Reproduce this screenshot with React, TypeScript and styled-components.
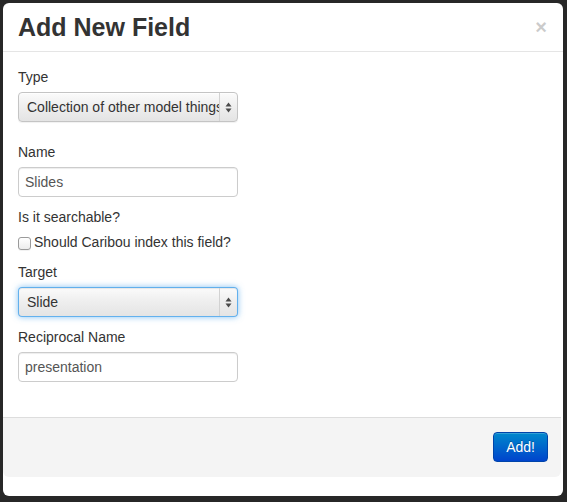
import React from 'react';
import styled, { createGlobalStyle } from 'styled-components';

const GlobalStyle = createGlobalStyle`
  html, body {
    margin: 0;
    padding: 0;
    background: #272727;
  }
  body {
    font-family: 'Liberation Sans', Arial, sans-serif;
    font-size: 14px;
    color: #333;
  }
`;

const Page = styled.div`
  width: 567px;
  height: 502px;
  padding: 3px;
  box-sizing: border-box;
`;

const Modal = styled.div`
  width: 560px;
  height: 493px;
  background: #fff;
  border-radius: 6px;
  display: flex;
  flex-direction: column;
  overflow: hidden;
`;

const Header = styled.div`
  display: flex;
  justify-content: space-between;
  align-items: center;
  padding: 9px 16px 9px 15px;
  border-bottom: 1px solid #e5e5e5;
`;

const Title = styled.h3`
  margin: 0;
  font-size: 25px;
  line-height: 30px;
  font-weight: bold;
  color: #333;
`;

const Close = styled.button`
  border: 0;
  background: none;
  padding: 0;
  font-family: 'Liberation Sans', Arial, sans-serif;
  font-size: 20px;
  font-weight: bold;
  line-height: 20px;
  color: #000;
  opacity: 0.2;
  margin-top: -1px;
`;

const Body = styled.div`
  flex: 1;
  padding: 15px;
`;

const Field = styled.div<{ gap?: number }>`
  display: flex;
  flex-direction: column;
  align-items: flex-start;
  margin-bottom: ${(p) => p.gap ?? 10}px;
`;

const Label = styled.label`
  display: block;
  line-height: 20px;
  margin-bottom: 5px;
`;

const TextInput = styled.input`
  box-sizing: border-box;
  width: 220px;
  height: 30px;
  padding: 4px 6px;
  font-family: 'Liberation Sans', Arial, sans-serif;
  font-size: 14px;
  color: #555;
  border: 1px solid #ccc;
  border-radius: 4px;
  box-shadow: inset 0 1px 1px rgba(0, 0, 0, 0.075);
  outline: none;
`;

const SelectBox = styled.div<{ focused?: boolean }>`
  box-sizing: border-box;
  width: 220px;
  height: 30px;
  display: flex;
  align-items: stretch;
  border: 1px solid ${(p) => (p.focused ? 'rgba(82, 168, 236, 0.9)' : '#c4c4c4')};
  border-radius: 4px;
  background: linear-gradient(#fbfbfb, #efefef 45%, #e4e4e4);
  box-shadow: ${(p) =>
    p.focused
      ? '0 0 6px rgba(82, 168, 236, 0.7), inset 0 1px 1px rgba(0,0,0,0.08)'
      : 'inset 0 1px 0 rgba(255,255,255,0.8), 0 1px 1px rgba(0,0,0,0.06)'};
  color: #333;
`;

const SelectValue = styled.div`
  flex: 1;
  padding-left: 8px;
  line-height: 28px;
  white-space: nowrap;
  overflow: hidden;
`;

const SelectArrows = styled.div`
  width: 17px;
  border-left: 1px solid #d2d2d2;
  display: flex;
  align-items: center;
  justify-content: center;
`;

const CheckRow = styled.label`
  display: flex;
  align-items: center;
  line-height: 20px;
  gap: 3px;
`;

const Checkbox = styled.span`
  box-sizing: border-box;
  width: 13px;
  height: 13px;
  margin-top: 3px;
  border: 1px solid #9a9a9a;
  border-radius: 3px;
  background: linear-gradient(#fff, #ececec);
  box-shadow: 0 1px 0 rgba(0, 0, 0, 0.05);
`;

const Footer = styled.div`
  display: flex;
  justify-content: flex-end;
  padding: 14px 13px 15px 15px;
  margin: 0 2px 19px 0;
  background: #f4f4f4;
  border-top: 1px solid #ddd;
  border-radius: 0 0 6px 6px;
`;

const PrimaryButton = styled.button`
  height: 30px;
  padding: 0 12px;
  font-family: 'Liberation Sans', Arial, sans-serif;
  font-size: 14px;
  color: #fff;
  text-shadow: 0 -1px 0 rgba(0, 0, 0, 0.25);
  background: linear-gradient(#0088cc, #0044cc);
  border: 1px solid #0044aa;
  border-radius: 4px;
  box-shadow: inset 0 1px 0 rgba(255, 255, 255, 0.2);
`;

const Arrows = () => (
  <svg width="7" height="11" viewBox="0 0 7 11">
    <path d="M3.5 0.5 L6.5 4.5 L0.5 4.5 Z" fill="#4a4a4a" />
    <path d="M0.5 6.5 L6.5 6.5 L3.5 10.5 Z" fill="#4a4a4a" />
  </svg>
);

interface SelectProps {
  value: string;
  focused?: boolean;
}

const Select: React.FC<SelectProps> = ({ value, focused }) => (
  <SelectBox focused={focused}>
    <SelectValue>{value}</SelectValue>
    <SelectArrows>
      <Arrows />
    </SelectArrows>
  </SelectBox>
);

const App: React.FC = () => (
  <Page>
    <GlobalStyle />
    <Modal>
      <Header>
        <Title>Add New Field</Title>
        <Close>×</Close>
      </Header>
      <Body>
        <Field gap={20}>
          <Label>Type</Label>
          <Select value="Collection of other model things" />
        </Field>
        <Field>
          <Label>Name</Label>
          <TextInput defaultValue="Slides" />
        </Field>
        <Field>
          <Label>Is it searchable?</Label>
          <CheckRow>
            <Checkbox />
            Should Caribou index this field?
          </CheckRow>
        </Field>
        <Field>
          <Label>Target</Label>
          <Select value="Slide" focused />
        </Field>
        <Field>
          <Label>Reciprocal Name</Label>
          <TextInput defaultValue="presentation" />
        </Field>
      </Body>
      <Footer>
        <PrimaryButton>Add!</PrimaryButton>
      </Footer>
    </Modal>
  </Page>
);

export default App;
